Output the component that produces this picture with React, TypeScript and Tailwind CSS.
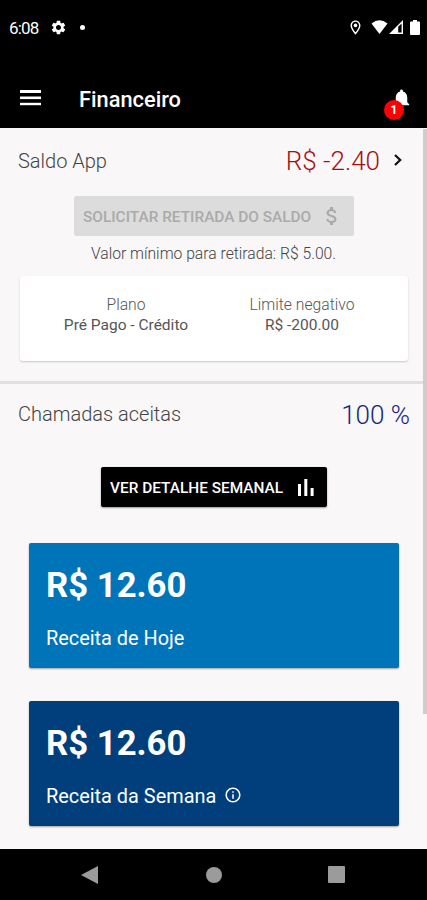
import { MdSettings, MdOutlineLocationOn, MdNotifications, MdAttachMoney, MdInfoOutline } from "react-icons/md";

interface RevenueCardProps {
  value: string;
  label: string;
  color: string;
  info?: boolean;
}

function StatusBar() {
  return (
    <div className="flex h-[54px] items-center text-white">
      <span className="ml-[9px] w-[30px] whitespace-nowrap pt-[2px] text-[17px] tracking-[-0.8px] leading-none">6:08</span>
      <MdSettings className="ml-[11px] size-[17px]" />
      <span className="ml-[13px] size-[5px] rounded-full bg-white" />
      <MdOutlineLocationOn className="ml-auto size-[17px]" />
      <svg className="ml-[7px]" width="17" height="14" viewBox="0 0 17 14" fill="white">
        <path d="M0.5 3.6 Q8.5 -3 16.5 3.6 L8.5 14 Z" />
      </svg>
      <svg className="ml-px" width="14" height="14" viewBox="0 0 14 14">
        <path d="M14 0 V14 H0 Z M12.6 3.4 L9.2 6.8 V12.6 H12.6 Z" fill="white" fillRule="evenodd" />
      </svg>
      <svg className="ml-[7px] mr-[7px]" width="10" height="15" viewBox="0 0 10 15" fill="white">
        <path d="M3 0 H7 V1.5 H9 Q10 1.5 10 2.5 V14 Q10 15 9 15 H1 Q0 15 0 14 V2.5 Q0 1.5 1 1.5 H3 Z" />
      </svg>
    </div>
  );
}

function AppBar() {
  return (
    <div className="flex h-[74px] items-center pt-[27px] text-white">
      <svg className="ml-5 -mt-[13px]" width="21" height="16" viewBox="0 0 21 16" fill="white">
        <rect y="0" width="21" height="3" />
        <rect y="6.5" width="21" height="2.6" />
        <rect y="12.8" width="21" height="2.4" />
      </svg>
      <h1 className="ml-[38px] -mt-[9px] text-[21.8px] font-medium leading-none">Financeiro</h1>
      <div className="relative ml-auto mr-[15px] -mt-[13px] size-[22px]">
        <MdNotifications className="size-[23px]" />
        <span className="absolute -left-[6px] top-[13px] flex size-5 items-center justify-center rounded-full bg-[#fb0207] text-[12px] font-bold leading-none">
          1
        </span>
      </div>
    </div>
  );
}

function PlanInfo({ label, value }: { label: string; value: string }) {
  return (
    <div className="w-[176px] whitespace-nowrap text-center leading-[21px]">
      <p className="text-[15.7px] font-light text-[#555]">{label}</p>
      <p className="text-[15.5px] text-[#555]">{value}</p>
    </div>
  );
}

function RevenueCard({ value, label, color, info = false }: RevenueCardProps) {
  return (
    <div className={`mr-7 ml-[29px] h-[125px] rounded-[2px] pl-[17px] text-white shadow-[0_1px_2px_rgba(0,0,0,0.35)] ${color}`}>
      <p className="pt-[21px] text-[34.7px] font-bold leading-[42px]">{value}</p>
      <p className="mt-[21px] flex items-center text-[19.9px] leading-6">
        {label}
        {info && <MdInfoOutline className="ml-[8px] -mt-[4px] size-[18px]" />}
      </p>
    </div>
  );
}

function NavigationBar() {
  return (
    <nav className="flex h-[51px] items-center bg-black">
      <svg className="ml-[81px]" width="17" height="18" viewBox="0 0 17 18" fill="#9b9b9b">
        <path d="M17 0 V18 L0 9 Z" />
      </svg>
      <span className="ml-[108px] size-4 rounded-full bg-[#9b9b9b]" />
      <span className="ml-[106px] size-[17px] rounded-[1px] bg-[#9b9b9b]" />
    </nav>
  );
}

export default function App() {
  return (
    <div className="flex h-[900px] w-[427px] flex-col overflow-hidden bg-[#f9f7f8] font-['Roboto',sans-serif]">
      <header className="h-32 shrink-0 bg-black">
        <StatusBar />
        <AppBar />
      </header>

      <main className="relative h-[721px] shrink-0">
        <div className="flex h-[68px] items-center pl-[18px] pr-[25px] pb-[3px]">
          <span className="text-[20px] font-light text-[#444]">Saldo App</span>
          <span className="ml-auto pt-px text-[26px] font-light text-[#a90d12]">R$ -2.40</span>
          <svg className="ml-[14px] -mt-px" width="8" height="12" viewBox="0 0 8 12" fill="none" stroke="#111" strokeWidth="2.2">
            <path d="M1 1 L6.2 6 L1 11" />
          </svg>
        </div>

        <button className="ml-[74px] flex h-10 w-[280px] items-center whitespace-nowrap rounded-[2px] bg-[#dcdcdc] pl-[9px] text-[15.4px] font-medium text-[#aaa]">
          <span className="pt-[3px]">SOLICITAR RETIRADA DO SALDO</span>
          <MdAttachMoney className="ml-auto mr-[10px] size-6" />
        </button>
        <p className="h-10 pt-[8px] text-center text-[15.7px] leading-5 font-light text-[#444]">
          Valor mínimo para retirada: R$ 5.00.
        </p>

        <div className="ml-5 mr-[19px] flex h-[85px] rounded-[3px] bg-white pl-[18px] pt-[18px] shadow-[0_1px_2px_rgba(0,0,0,0.2)]">
          <PlanInfo label="Plano" value="Pré Pago - Crédito" />
          <PlanInfo label="Limite negativo" value="R$ -200.00" />
        </div>

        <div className="mt-5 h-[3px] bg-[#e1dfe0]" />

        <div className="flex h-[60px] items-center pl-[18px] pr-[17px]">
          <span className="text-[20px] font-light text-[#444]">Chamadas aceitas</span>
          <span className="ml-auto pt-[2px] text-[26px] font-light text-[#15237d]">100 %</span>
        </div>

        <button className="ml-[101px] mt-[23px] flex h-10 w-[226px] items-center whitespace-nowrap rounded-[2px] bg-black pl-[9px] text-[15.4px] font-medium text-white shadow-[0_1px_2px_rgba(0,0,0,0.4)]">
          <span className="pt-[3px]">VER DETALHE SEMANAL</span>
          <svg className="ml-auto mr-[13px]" width="16" height="17" viewBox="0 0 16 17" fill="white">
            <rect x="0" y="5" width="3" height="12" />
            <rect x="6.3" y="0" width="3" height="17" />
            <rect x="12.6" y="9" width="3" height="8" />
          </svg>
        </button>

        <div className="mt-9 flex flex-col gap-[33px]">
          <RevenueCard value="R$ 12.60" label="Receita de Hoje" color="bg-[#0074b9]" />
          <RevenueCard value="R$ 12.60" label="Receita da Semana" color="bg-[#003f7b]" info />
        </div>

        {/* scroll indicator */}
        <div className="absolute right-0 top-px h-[585px] w-[4px] bg-[#cecdce]" />
      </main>

      <NavigationBar />
    </div>
  );
}
